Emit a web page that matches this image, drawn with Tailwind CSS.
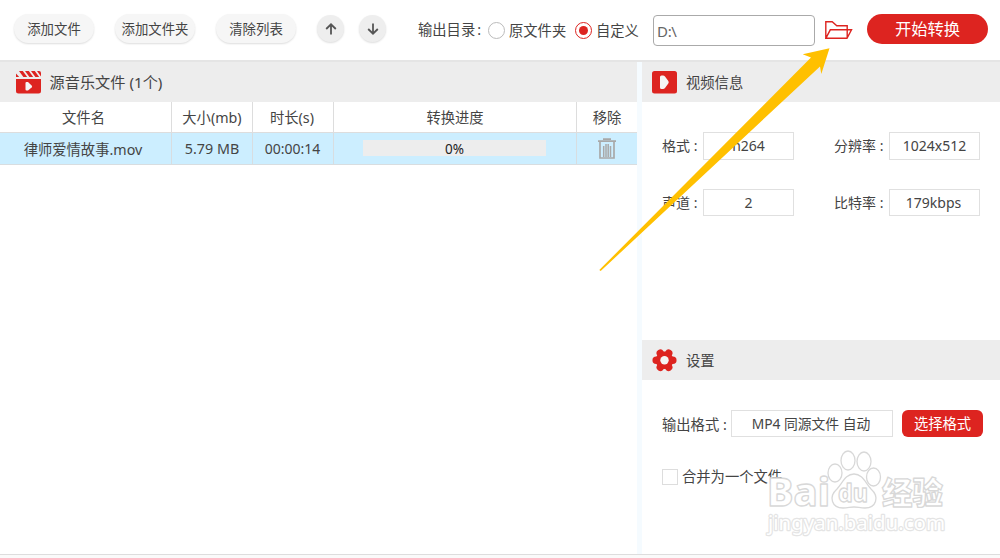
<!DOCTYPE html>
<html lang="zh-CN">
<head>
    <meta charset="UTF-8">
    <meta name="viewport" content="width=device-width, initial-scale=1.0">
    <title>视频转换</title>
    <script src="https://cdn.jsdelivr.net/npm/@tailwindcss/browser@4"></script>
</head>
<body class="relative h-[558px] w-[1000px] overflow-hidden bg-white font-['Noto_Sans','Noto_Sans_CJK_SC',sans-serif] text-[14px] leading-5 text-[#444] whitespace-nowrap">

    <!-- toolbar -->
    <header class="flex h-[62px] items-start border-b-2 border-[#e5e5e5] pt-[14px]">
        <button class="ml-[14px] h-[29px] w-20 rounded-full bg-[#f6f6f6] text-[13.4px] shadow-[0_1px_2px_#ddd]">添加文件</button>
        <button class="ml-[21px] h-[29px] w-20 rounded-full bg-[#f6f6f6] text-[13.4px] shadow-[0_1px_2px_#ddd]">添加文件夹</button>
        <button class="ml-[21px] h-[29px] w-20 rounded-full bg-[#f6f6f6] text-[13.4px] shadow-[0_1px_2px_#ddd]">清除列表</button>
        <button class="ml-[21px] mt-px flex size-[27px] items-center justify-center rounded-full bg-[#eee] shadow-[0_1px_2px_#ddd]">
            <svg class="size-3" viewBox="0 0 12 12" fill="none" stroke="#555" stroke-width="1.8"><path d="M6 11.5V1.5M1.2 6 6 1.3 10.8 6"/></svg>
        </button>
        <button class="ml-[15px] mt-px flex size-[27px] items-center justify-center rounded-full bg-[#eee] shadow-[0_1px_2px_#ddd]">
            <svg class="size-3" viewBox="0 0 12 12" fill="none" stroke="#555" stroke-width="1.8"><path d="M6 .5v10M1.2 6 6 10.7 10.8 6"/></svg>
        </button>
        <div class="ml-8 mt-[6px] w-[70px] text-[14.3px]">输出目录<span class="ml-[2px]">:</span></div>
        <div class="mt-2 size-[17px] rounded-full border border-[#bbb]"></div>
        <div class="ml-1 mt-[7px] w-[66px] text-[14.3px]">原文件夹</div>
        <div class="mt-2 flex size-[17px] items-center justify-center rounded-full border border-[#dd2420]">
            <div class="size-[9px] rounded-full bg-[#dd2420]"></div>
        </div>
        <div class="ml-1 mt-[7px] w-[57px] text-[14.3px]">自定义</div>
        <div class="mt-[1px] h-[31px] w-[162px] rounded-[4px] border border-[#aaa] pl-[3px] pt-[5px] text-[15px] tracking-[-0.3px] text-[#666]">D:\</div>
        <svg class="ml-[10px] mt-[6px] h-[20px] w-[28px]" viewBox="0 0 28 20" fill="none" stroke="#dd2420" stroke-width="1.4"><path d="M.8 18.3V1.7h6.4l4.6 4.1h10.4v11.8M.8 18.3 5.3 9.8h21.2L22 18.3z"/></svg>
        <button class="ml-[14px] h-[30px] w-[121px] rounded-full bg-[#dd2420] text-[16.3px] text-white">开始转换</button>
    </header>

    <div class="flex h-[492px]">
        <!-- file list -->
        <section class="w-[637px]">
            <div class="flex h-10 items-center bg-[#ededed] pl-[15.5px]">
                <svg class="h-[23px] w-[25px]" viewBox="0 0 25 23">
                    <path fill="#dd2420" d="M0 2.500 3.200 6H0zM3 0h3.800l4.400 6H7.400zM9 0h3.800l4.400 6h-3.800zM15 0h3.800l4.400 6h-3.800zM21 0h2q2 0 2 2v3.500zM0 8h25v12q0 2.500-2.500 2.500h-20Q0 22.500 0 20z"/>
                    <path fill="#f5f5f5" d="M9.500 12q0-1 1-1h1.500l3.600 3.500q1 1 0 2L12 19.500h-1.500q-1 0-1-1z"/>
                </svg>
                <h2 class="ml-[9px] text-[15.2px]">源音乐文件 (1个)</h2>
            </div>
            <div class="grid grid-cols-[172px_81px_81px_243px_60px] text-center text-[14.3px]">
                <div class="h-[31px] border-r border-b border-[#ddd] pr-1 pt-[6px]">文件名</div>
                <div class="border-r border-b border-[#ddd] pt-[6px]">大小(mb)</div>
                <div class="border-r border-b border-[#ddd] pr-[2px] pt-[6px]">时长(s)</div>
                <div class="border-r border-b border-[#ddd] pt-[6px]">转换进度</div>
                <div class="border-b border-[#ddd] pt-[6px]">移除</div>

                <div class="h-8 border-r border-b border-[#d8dde0] bg-[#cceeff] pr-[5px] pt-[7px]">律师爱情故事.mov</div>
                <div class="border-r border-b border-[#d8dde0] bg-[#cceeff] pt-[6px]">5.79 MB</div>
                <div class="border-r border-b border-[#d8dde0] bg-[#cceeff] pr-px pt-[6px] text-[14px]">00:00:14</div>
                <div class="border-r border-b border-[#d8dde0] bg-[#cceeff] pl-[29px] pt-[7px]">
                    <div class="h-4 w-[183px] bg-[#ededed] text-[13.5px] leading-[18px] text-[#222]">0%</div>
                </div>
                <div class="flex justify-center border-b border-[#d8dde0] bg-[#cceeff] pt-[5px]">
                    <svg class="h-[21px] w-[18px]" viewBox="0 0 18 21" fill="none" stroke="#a8a8a8"><path stroke-width="1.700" d="M0 3.200h18M5 1.200h8M2 3v17h14V3"/><path stroke-width="1.500" d="M5.700 8v11M8 6v13M10.200 6v13M12.500 8v11"/></svg>
                </div>
            </div>
        </section>

        <div class="w-[5px] bg-[#f5fbff]"></div>

        <aside class="w-[358px]">
            <!-- video info -->
            <div class="flex h-10 items-center bg-[#ededed] pl-[10px]">
                <svg class="h-[23px] w-[25px]" viewBox="0 0 25 23"><rect width="25" height="22.500" rx="2.500" fill="#dd2420"/><path fill="#f5f5f5" d="M8 6q0-1.500 1.500-1.500H11q1.200 0 2 1l3.300 4.500q.9 1.200 0 2.500L13 17q-.8 1-2 1H9.500Q8 18 8 16.500z"/></svg>
                <h2 class="ml-[9px] pt-px text-[14.3px]">视频信息</h2>
            </div>
            <div class="grid h-[238px] grid-cols-[61px_91px_40px_55px_91px] content-start gap-y-[29px] pt-[30px]">
                <div class="pl-5 pt-1">格式 :</div>
                <div class="h-7 border border-[#e0e0e0] pt-[3px] text-center">h264</div>
                <div></div>
                <div class="pt-1">分辨率 :</div>
                <div class="border border-[#e0e0e0] pt-[3px] text-center">1024x512</div>
                <div class="pl-5 pt-1">声道 :</div>
                <div class="h-[27px] border border-[#e0e0e0] pt-[3px] text-center">2</div>
                <div></div>
                <div class="pt-1">比特率 :</div>
                <div class="border border-[#e0e0e0] pt-[3px] pr-[2px] text-center">179kbps</div>
            </div>

            <!-- settings -->
            <div class="flex h-10 items-center bg-[#ededed] pl-[10px]">
                <svg class="h-[23px] w-[25px]" viewBox="0 0 25 23">
                    <path stroke="#dd2420" stroke-width="7.500" stroke-linecap="round" d="M4.200 11.300h16.600M8.300 4.300l8.400 14M16.700 4.300l-8.400 14"/>
                    <circle cx="12.500" cy="11.300" r="8.800" fill="#dd2420"/><circle cx="12.500" cy="11.300" r="4.200" fill="#f5f5f5"/>
                </svg>
                <h2 class="ml-[9px] pt-[2px] text-[14.3px]">设置</h2>
            </div>
            <div class="flex pl-5 pt-[30px]">
                <div class="w-[69px] pt-[5px] text-[14.3px]">输出格式 :</div>
                <div class="h-[27px] w-[162px] border border-[#e0e0e0] pt-[3px] pr-[2px] text-center text-[13.8px]">MP4 同源文件 自动</div>
                <button class="ml-[9px] h-[27px] w-[81px] rounded-[6px] bg-[#dd2420] pt-px text-[14.3px] text-white">选择格式</button>
            </div>
            <div class="mt-[30px] flex items-center pl-5">
                <div class="size-4 border border-[#ddd]"></div>
                <div class="ml-1 text-[14.3px]">合并为一个文件</div>
            </div>
        </aside>
    </div>
    <div class="h-1 border-t border-[#ddd] bg-[#fafafa]"></div>

    <!-- pointer arrow -->
    <svg class="absolute left-0 top-0 h-[558px] w-[1000px]" viewBox="0 0 1000 558">
        <path fill="#ffc000" d="M829.500 48.300 802.700 54.300 811 57.500 599.300 270 600.700 271 820 66.500 821.300 74z"/>
    </svg>

    <!-- watermark -->
    <svg class="absolute left-[755px] top-[445px] h-[95px] w-[200px]" viewBox="0 0 200 95" fill="#fff" stroke="#d8d8d8" stroke-width="1.300" font-family="'Noto Sans','Noto Sans CJK SC',sans-serif">
        <g font-weight="800" stroke-linejoin="round">
            <text x="12" y="61" font-size="39" textLength="63" lengthAdjust="spacingAndGlyphs">Bai</text>
            <ellipse cx="80" cy="28" rx="7" ry="9"/>
            <ellipse cx="93" cy="15.500" rx="7" ry="9.500"/>
            <ellipse cx="109" cy="16.500" rx="7" ry="9.500"/>
            <ellipse cx="118.500" cy="32" rx="7" ry="9"/>
            <path d="M99 29c8 0 11 8 17 15 9 8 5 19-6 19-5 0-7-1-11-1s-6 1-11 1c-11 0-15-11-6-19 6-7 9-15 17-15z"/>
            <text x="83" y="57" font-size="24" textLength="30" lengthAdjust="spacingAndGlyphs">du</text>
            <text x="127" y="59" font-size="31" font-weight="900" textLength="61" lengthAdjust="spacingAndGlyphs">经验</text>
        </g>
        <text x="13" y="85" font-size="20" stroke-width="2.400" stroke-linejoin="round" paint-order="stroke" stroke="#e4e4e4" textLength="177" lengthAdjust="spacingAndGlyphs">jingyan.baidu.com</text>
    </svg>

</body>
</html>
